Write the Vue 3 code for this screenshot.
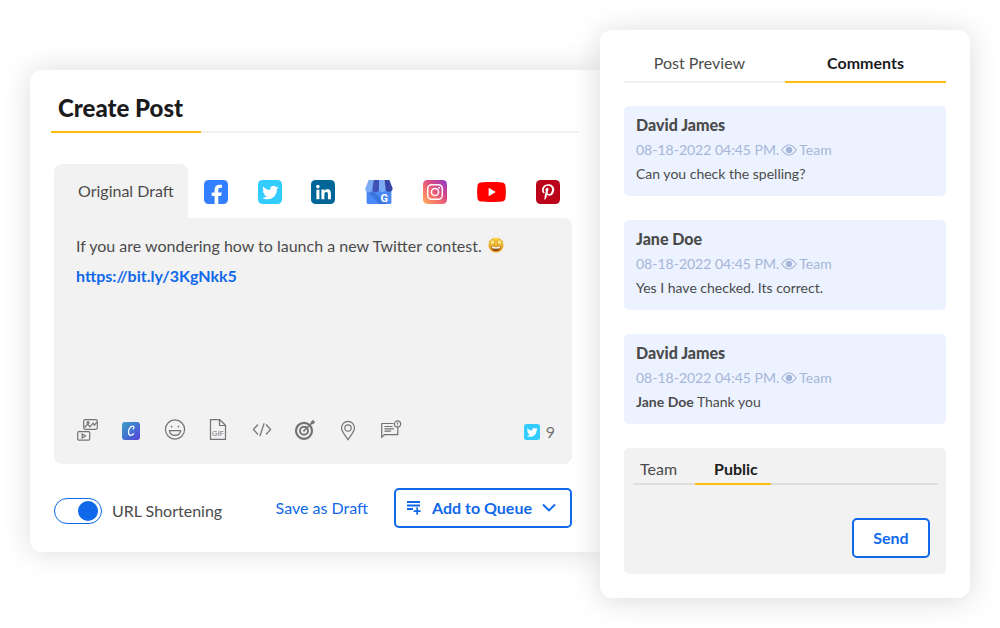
<script setup>
import { ref } from 'vue'

const shortening = ref(true)
const previewTab = ref('Comments')
const replyTab = ref('Public')
const reply = ref('')

const comments = [
  { id: 1, author: 'David James', mention: '', text: 'Can you check the spelling?' },
  { id: 2, author: 'Jane Doe', mention: '', text: 'Yes I have checked. Its correct.' },
  { id: 3, author: 'David James', mention: 'Jane Doe', text: 'Thank you' },
]

const birdPath =
  'M23.953 4.57a10 10 0 01-2.825.775 4.958 4.958 0 002.163-2.723c-.951.555-2.005.959-3.127 1.184a4.92 4.92 0 00-8.384 4.482C7.69 8.095 4.067 6.13 1.64 3.162a4.822 4.822 0 00-.666 2.475c0 1.71.87 3.213 2.188 4.096a4.904 4.904 0 01-2.228-.616v.06a4.923 4.923 0 003.946 4.827 4.996 4.996 0 01-2.212.085 4.936 4.936 0 004.604 3.417 9.867 9.867 0 01-6.102 2.105c-.39 0-.779-.023-1.17-.067a13.995 13.995 0 007.557 2.209c9.053 0 13.998-7.496 13.998-13.985 0-.21 0-.42-.015-.63A9.935 9.935 0 0024 4.59z'
</script>

<template>
  <main class="stage">
    <section class="composer">
      <header class="composer-head">
        <h1>Create Post</h1>
      </header>

      <div class="composer-body">
        <div class="networks">
          <button class="draft-tab" type="button">Original Draft</button>
          <div class="network-list">
            <button class="icon-btn" type="button" aria-label="Facebook">
              <svg width="24" height="24" viewBox="0 0 24 24">
                <rect width="24" height="24" rx="4.5" fill="#337fff" />
                <path fill="#fff" d="M10.6 24v-8.1H7.7v-3.3h2.9v-2.7c0-3.3 1.9-5.2 4.9-5.2.9 0 1.7.1 2.5.2v2.9h-1.4c-1.6 0-2.3.9-2.3 2.2v2.6h3.4l-.5 3.3h-2.9V24z" />
              </svg>
            </button>
            <button class="icon-btn" type="button" aria-label="Twitter">
              <svg width="24" height="24" viewBox="0 0 24 24">
                <rect width="24" height="24" rx="4.5" fill="#33ccff" />
                <path fill="#fff" transform="translate(4.2 4.4) scale(.68)" :d="birdPath" />
              </svg>
            </button>
            <button class="icon-btn" type="button" aria-label="LinkedIn">
              <svg width="24" height="24" viewBox="0 0 24 24">
                <rect width="24" height="24" rx="4.5" fill="#006699" />
                <circle cx="6.9" cy="6.6" r="1.8" fill="#fff" />
                <rect x="5.4" y="9.6" width="3" height="9.6" fill="#fff" />
                <path fill="#fff" d="M10.4 9.6h2.9v1.3c.5-.9 1.5-1.6 3-1.6 3 0 3.6 2 3.6 4.6v5.3h-3v-4.7c0-1.2 0-2.6-1.6-2.6s-1.9 1.3-1.9 2.6v4.7h-3z" />
              </svg>
            </button>
            <button class="icon-btn" type="button" aria-label="Google My Business">
              <svg width="28" height="24" viewBox="0 0 28 24">
                <path fill="#4989f5" d="M1.6 8h24.8v14.4a1.6 1.6 0 0 1-1.6 1.6H3.2a1.6 1.6 0 0 1-1.6-1.6z" />
                <path fill="#3b74dd" d="M3 12l5-1 13.5 13H14z" />
                <path fill="#7babf7" d="M3.6 0H8.6L7.6 9a3.6 3.6 0 0 1-7.3-.4z" />
                <path fill="#3f51b5" d="M8.6 0H14v8.8a3.3 3.3 0 0 1-6.6 0z" />
                <path fill="#7babf7" d="M14 0h5.4l1.2 8.8a3.3 3.3 0 0 1-6.6 0z" />
                <path fill="#3545a8" d="M19.4 0h5l3.3 8.6a3.6 3.6 0 0 1-7.1.4z" />
                <text x="15.6" y="22.4" class="logo-g">G</text>
              </svg>
            </button>
            <button class="icon-btn" type="button" aria-label="Instagram">
              <svg width="24" height="24" viewBox="0 0 24 24">
                <defs>
                  <linearGradient id="ig" x1="0" y1="1" x2="1" y2="0">
                    <stop offset="0" stop-color="#fdb05f" />
                    <stop offset=".35" stop-color="#f5716b" />
                    <stop offset=".6" stop-color="#dd4a84" />
                    <stop offset="1" stop-color="#8a3ac8" />
                  </linearGradient>
                </defs>
                <rect width="24" height="24" rx="4.5" fill="url(#ig)" />
                <rect x="4.7" y="4.7" width="14.6" height="14.6" rx="4" fill="none" stroke="#fff" stroke-width="1.5" />
                <circle cx="12" cy="12" r="3.6" fill="none" stroke="#fff" stroke-width="1.5" />
                <circle cx="16.2" cy="7.8" r="1" fill="#fff" />
              </svg>
            </button>
            <button class="icon-btn" type="button" aria-label="YouTube">
              <svg width="29" height="24" viewBox="0 0 29 24">
                <path fill="#f00" d="M4 2.4C9 1.8 20 1.8 25 2.4c2 .2 3.3 1.5 3.5 3.4.5 4 .5 8.4 0 12.4-.2 1.9-1.5 3.2-3.5 3.4-5 .6-16 .6-21 0-2-.2-3.3-1.5-3.5-3.4-.5-4-.5-8.4 0-12.4C.7 3.9 2 2.6 4 2.4z" />
                <path fill="#fff" d="M11.6 7.8v8.4l7.2-4.2z" />
              </svg>
            </button>
            <button class="icon-btn" type="button" aria-label="Pinterest">
              <svg width="24" height="24" viewBox="0 0 24 24">
                <rect width="24" height="24" rx="4.5" fill="#bb0419" />
                <path fill="#fff" transform="translate(6 4) scale(.0318)" d="M204 6.5C101.4 6.5 0 74.9 0 185.6 0 256 39.6 296 63.6 296c9.9 0 15.6-27.6 15.6-35.4 0-9.3-23.7-29.1-23.7-67.8 0-80.4 61.2-137.4 140.4-137.4 68.1 0 118.5 38.7 118.5 109.8 0 53.1-21.3 152.7-90.3 152.7-24.9 0-46.2-18-46.2-43.8 0-37.8 26.4-74.4 26.4-113.4 0-66.2-93.9-54.2-93.9 25.8 0 16.8 2.1 35.4 9.6 50.7-13.8 59.4-42 147.9-42 209.1 0 18.9 2.7 37.5 4.5 56.4 3.4 3.8 1.7 3.4 6.9 1.5 50.4-69 48.6-82.5 71.4-172.8 12.3 23.4 44.1 36 69.3 36 106.2 0 153.9-103.5 153.9-196.8C384 71.3 298.2 6.5 204 6.5z" />
              </svg>
            </button>
          </div>
        </div>

        <div class="editor">
          <div class="editor-text">
            <p>
              If you are wondering how to launch a new Twitter contest.
              <svg class="emoji" width="16" height="16" viewBox="0 0 16 16" role="img" aria-label="Star-struck">
                <defs>
                  <linearGradient id="face" x1="0" y1="0" x2="0" y2="1">
                    <stop offset="0" stop-color="#fbd84a" />
                    <stop offset="1" stop-color="#ea921a" />
                  </linearGradient>
                </defs>
                <circle cx="8" cy="8" r="7.6" fill="url(#face)" />
                <path fill="#8a4b12" d="M2.8 9.2c3.4 1 7 1 10.4 0-.2 3-2.2 4.9-5.2 4.9s-5-1.9-5.2-4.9z" />
                <path fill="#fff" d="M3.6 9.6c3 .8 5.8.8 8.8 0l-.3 1.7c-2.7.6-5.5.6-8.2 0z" />
                <path fill="#fbe27a" stroke="#c98a1c" stroke-width=".5" d="M4.3 1.8l1.1 2 2.3.4-1.6 1.7.3 2.3-2.1-1-2.1 1 .3-2.3L.9 4.2l2.300-.4zM11.700 1.800l1.100 2 2.300.4-1.600 1.700.3 2.300-2.100-1-2.100 1 .3-2.300-1.600-1.700 2.300-.4z" />
              </svg>
            </p>
            <a href="https://bit.ly/3KgNkk5">https://bit.ly/3KgNkk5</a>
          </div>

          <div class="toolbar">
            <div class="tools">
              <button class="tool" type="button" aria-label="Add media">
                <svg width="24" height="24" viewBox="0 0 24 24">
                  <rect x="7.7" y="1.7" width="13.6" height="9.6" rx="1.5" />
                  <path d="M8.5 9.5l3.2-3.3 2.3 2.6 3-3.6 1.4 2 2.5-3" />
                  <circle cx="12" cy="4.6" r="1" />
                  <rect x="1.7" y="13.7" width="12" height="8.4" rx="1" />
                  <path d="M6.2 16v4l3.4-2z" />
                </svg>
              </button>
              <button class="tool" type="button" aria-label="Canva">
                <svg width="24" height="24" viewBox="0 0 24 24">
                  <defs>
                    <linearGradient id="canva" x1="0" y1="0" x2="1" y2="1">
                      <stop offset="0" stop-color="#3d9fc8" />
                      <stop offset=".5" stop-color="#4275cf" />
                      <stop offset="1" stop-color="#5b3fdc" />
                    </linearGradient>
                  </defs>
                  <rect x="3" y="4" width="18" height="18" rx="3" class="canva-bg" />
                  <path class="canva-c" d="M14.100 11c1.200-.9 1.300-2.800-.4-2.800-2.400 0-4.200 3-4.200 5.800 0 2 .9 3.400 2.400 3.400 1.100 0 2-.7 2.700-1.700" />
                </svg>
              </button>
              <button class="tool" type="button" aria-label="Emoji">
                <svg width="24" height="24" viewBox="0 0 24 24">
                  <circle cx="12" cy="11.5" r="9.6" />
                  <circle class="solid" cx="8.6" cy="8.6" r=".9" />
                  <circle class="solid" cx="15.4" cy="8.6" r=".9" />
                  <path d="M6.4 12.7h11.2c-.4 2.9-2.6 4.7-5.6 4.7s-5.2-1.8-5.6-4.7z" />
                </svg>
              </button>
              <button class="tool" type="button" aria-label="GIF">
                <svg width="24" height="24" viewBox="0 0 24 24">
                  <path d="M4.5 1.7h9.3l5.7 5.6v14H4.5zM13.5 1.7v5.8h6" />
                  <text x="6" y="18" class="gif">GIF</text>
                </svg>
              </button>
              <button class="tool" type="button" aria-label="Code">
                <svg width="24" height="24" viewBox="0 0 24 24">
                  <path d="M8 6.500l-4.600 5L8 16.500M16 6.500l4.600 5-4.600 5M14.200 5.200L9.800 18.300" />
                </svg>
              </button>
              <button class="tool" type="button" aria-label="Audience">
                <svg width="24" height="24" viewBox="0 0 24 24">
                  <circle cx="11" cy="12.800" r="8" stroke-width="2.200" />
                  <circle cx="11" cy="12.800" r="4" stroke-width="1.900" />
                  <circle class="solid" cx="11" cy="12.800" r="1" />
                  <path d="M11 12.800l8.500-8.400" stroke-width="1.600" />
                  <path class="solid" d="M17.800 4l2.500-2.500.4 1.800 1.800.4L20 6.200l-2-.2z" />
                </svg>
              </button>
              <button class="tool" type="button" aria-label="Location">
                <svg width="24" height="24" viewBox="0 0 24 24">
                  <path d="M11 21.700C8 17 4.500 13.300 4.500 9.900a6.500 6.500 0 0 1 13 0c0 3.400-3.500 7.100-6.500 11.800z" />
                  <circle cx="11" cy="10" r="3.200" />
                </svg>
              </button>
              <button class="tool" type="button" aria-label="Add comment">
                <svg width="24" height="24" viewBox="0 0 24 24">
                  <path d="M13.500 5.500H1.700v13.600l2.800-2.400h13.300V9.500M4.500 8.500h8M4.500 10.800H14M4.500 13.200H11" />
                  <circle cx="17.500" cy="6" r="3.100" />
                  <path d="M17.500 4.600v1.800M17.500 7.300v.5" />
                </svg>
              </button>
            </div>
            <div class="counter">
              <svg width="16" height="16" viewBox="0 0 24 24">
                <rect width="24" height="24" rx="4" fill="#33ccff" />
                <path fill="#fff" transform="translate(4.2 4.4) scale(.68)" :d="birdPath" />
              </svg>
              <span>9</span>
            </div>
          </div>
        </div>

        <footer class="actions">
          <label class="toggle">
            <input v-model="shortening" type="checkbox" />
            <span>URL Shortening</span>
          </label>
          <button class="link-btn" type="button">Save as Draft</button>
          <button class="outline queue" type="button">
            <svg width="16" height="16" viewBox="0 0 16 16">
              <path d="M1 2h13M1 5.500h13M1 9h6" stroke="#1068ea" stroke-width="1.800" />
              <path d="M11.200 7.200v7.600M7.600 11.200h7" stroke="#1068ea" stroke-width="1.700" />
            </svg>
            <span>Add to Queue</span>
            <svg width="14" height="16" viewBox="0 0 14 16">
              <path d="M1 4.500l6 6 6-6" fill="none" stroke="#1068ea" stroke-width="1.900" />
            </svg>
          </button>
        </footer>
      </div>
    </section>

    <aside class="review">
      <nav class="review-tabs">
        <button
          v-for="name in ['Post Preview', 'Comments']"
          :key="name"
          type="button"
          :class="{ active: previewTab === name }"
          @click="previewTab = name"
        >{{ name }}</button>
      </nav>

      <article v-for="c in comments" :key="c.id" class="comment">
        <h2>{{ c.author }}</h2>
        <div class="meta">
          <time>08-18-2022 04:45 PM.</time>
          <svg width="16" height="12" viewBox="0 0 16 12">
            <path d="M.7 6C3.5 2.2 5.6 1 8 1s4.5 1.2 7.3 5C12.5 9.8 10.4 11 8 11S3.5 9.8.7 6z" fill="none" stroke="#a5b6d8" stroke-width="1.1" />
            <circle cx="8" cy="6" r="3.2" fill="#a5b6d8" />
          </svg>
          <span>Team</span>
        </div>
        <p><b v-if="c.mention">{{ c.mention }}</b> {{ c.text }}</p>
      </article>

      <form class="reply" @submit.prevent>
        <nav class="reply-tabs">
          <button
            v-for="name in ['Team', 'Public']"
            :key="name"
            type="button"
            :class="{ active: replyTab === name }"
            @click="replyTab = name"
          >{{ name }}</button>
        </nav>
        <div class="reply-row">
          <textarea v-model="reply" aria-label="Reply"></textarea>
          <button class="outline send" type="submit">Send</button>
        </div>
      </form>
    </aside>
  </main>
</template>

<style>
body {
  background: #fff;
}
</style>

<style scoped>
* {
  box-sizing: border-box;
}
.stage {
  display: flex;
  align-items: flex-start;
  padding: 30px;
  font-family: Lato, "Open Sans", sans-serif;
  font-size: 16px;
  line-height: 24px;
  color: #4b4b4b;
}
h1,
h2,
p {
  margin: 0;
}
button {
  margin: 0;
  padding: 0;
  border: 0;
  background: none;
  font: inherit;
  color: inherit;
  cursor: pointer;
}
svg {
  display: block;
  flex: none;
}

.composer {
  flex: 1;
  min-width: 0;
  margin-top: 40px;
  padding: 0 21px 24px;
  border-radius: 12px 0 0 12px;
  background: #fff;
  box-shadow: 0 0 30px rgba(0, 0, 0, 0.14);
}
.composer-head {
  display: flex;
  box-shadow: inset 0 -2px #f2f2f2;
}
h1 {
  padding: 22px 18px 7px 7px;
  border-bottom: 2px solid #fdbd10;
  font-size: 24px;
  line-height: 32px;
  font-weight: 900;
  color: #1b1b1d;
}
.composer-body {
  padding: 31px 7px 0 3px;
}
.networks {
  display: flex;
}
.draft-tab {
  height: 54px;
  padding: 0 14px 0 24px;
  border-radius: 8px 8px 0 0;
  background: #f2f2f2;
}
.network-list {
  flex: 1;
  display: flex;
  align-items: center;
  justify-content: space-between;
  padding: 2px 12px 0 16px;
}
.logo-g {
  font: 700 11px Roboto, sans-serif;
  fill: #fff;
}
.editor {
  display: flex;
  flex-direction: column;
  justify-content: space-between;
  min-height: 246px;
  padding: 13px 17px 20px 22px;
  border-radius: 0 8px 8px 8px;
  background: #f2f2f2;
}
.editor-text {
  line-height: 30px;
}
.emoji {
  display: inline-block;
  margin-left: 2px;
  vertical-align: -1px;
}
.editor-text a {
  display: block;
  font-weight: 700;
  color: #1068ea;
  text-decoration: none;
}
.toolbar {
  display: flex;
  align-items: flex-end;
  justify-content: space-between;
}
.tools {
  flex: 1;
  display: flex;
  justify-content: space-between;
  max-width: 328px;
  padding-bottom: 2px;
}
.tool svg {
  fill: none;
  stroke: #737373;
  stroke-width: 1.2;
}
.tool .solid {
  fill: #737373;
  stroke: none;
}
.tool .canva-bg {
  fill: url(#canva);
  stroke: none;
}
.tool .canva-c {
  stroke: #fff;
  stroke-linecap: round;
}
.gif {
  font: 400 7px "Liberation Sans", sans-serif;
  fill: #737373;
  stroke: none;
}
.counter {
  display: flex;
  align-items: center;
  gap: 6px;
  color: #737373;
}

.actions {
  display: flex;
  align-items: center;
  margin-top: 24px;
}
.toggle {
  display: flex;
  align-items: center;
  gap: 10px;
  margin-right: auto;
  padding-top: 5px;
}
.toggle input {
  appearance: none;
  display: flex;
  align-items: center;
  width: 48px;
  height: 26px;
  margin: 0;
  padding: 0 3px;
  border: 1px solid #1068ea;
  border-radius: 13px;
}
.toggle input::before {
  content: "";
  width: 20px;
  height: 20px;
  border-radius: 50%;
  background: #1068ea;
}
.toggle input:checked {
  justify-content: flex-end;
}
.link-btn {
  margin-right: 26px;
  color: #1068ea;
}
.outline {
  height: 40px;
  border: 2px solid #1068ea;
  border-radius: 5px;
  background: #fff;
  font-weight: 700;
  color: #1068ea;
}
.queue {
  display: flex;
  align-items: center;
  justify-content: space-between;
  width: 178px;
  padding: 0 14px 0 10px;
}

.review {
  position: relative;
  display: flex;
  flex-direction: column;
  gap: 24px;
  width: 370px;
  padding: 0 24px 24px;
  border-radius: 12px;
  background: #fff;
  box-shadow: 0 2px 30px rgba(0, 0, 0, 0.15);
}
.review-tabs {
  display: grid;
  grid-template-columns: 1fr 1fr;
  margin-bottom: -1px;
}
.review-tabs button {
  padding: 21px 0 6px;
  border-bottom: 2px solid #f2f2f2;
}
.review-tabs button:first-child {
  padding-right: 10px;
}
.review-tabs .active,
.reply-tabs .active {
  border-color: #fdbd10;
  font-weight: 700;
  color: #1b1b1d;
}
.comment {
  min-height: 90px;
  padding: 7px 12px;
  border-radius: 5px;
  background: #ecf2ff;
}
h2 {
  font-size: 16px;
  line-height: 24px;
  font-weight: 900;
}
.meta {
  display: flex;
  align-items: center;
  gap: 2px;
  font-size: 14px;
  line-height: 26px;
  color: #a5b6d8;
}
.comment p {
  font-size: 14px;
  line-height: 22px;
}
.reply {
  padding: 0 8px 16px 9px;
  border-radius: 5px;
  background: #f2f2f2;
}
.reply-tabs {
  display: flex;
  box-shadow: inset 0 -2px #dfdfdf;
}
.reply-tabs button {
  padding: 9px 18px 2px 7px;
  border-bottom: 2px solid transparent;
}
.reply-tabs .active {
  padding: 9px 13px 2px 19px;
}
.reply-row {
  display: flex;
  align-items: flex-end;
  gap: 8px;
  padding-right: 8px;
}
.reply textarea {
  flex: 1;
  min-width: 0;
  height: 73px;
  padding: 8px;
  border: 0;
  outline: 0;
  resize: none;
  background: transparent;
  font: inherit;
}
.send {
  width: 78px;
}
</style>
